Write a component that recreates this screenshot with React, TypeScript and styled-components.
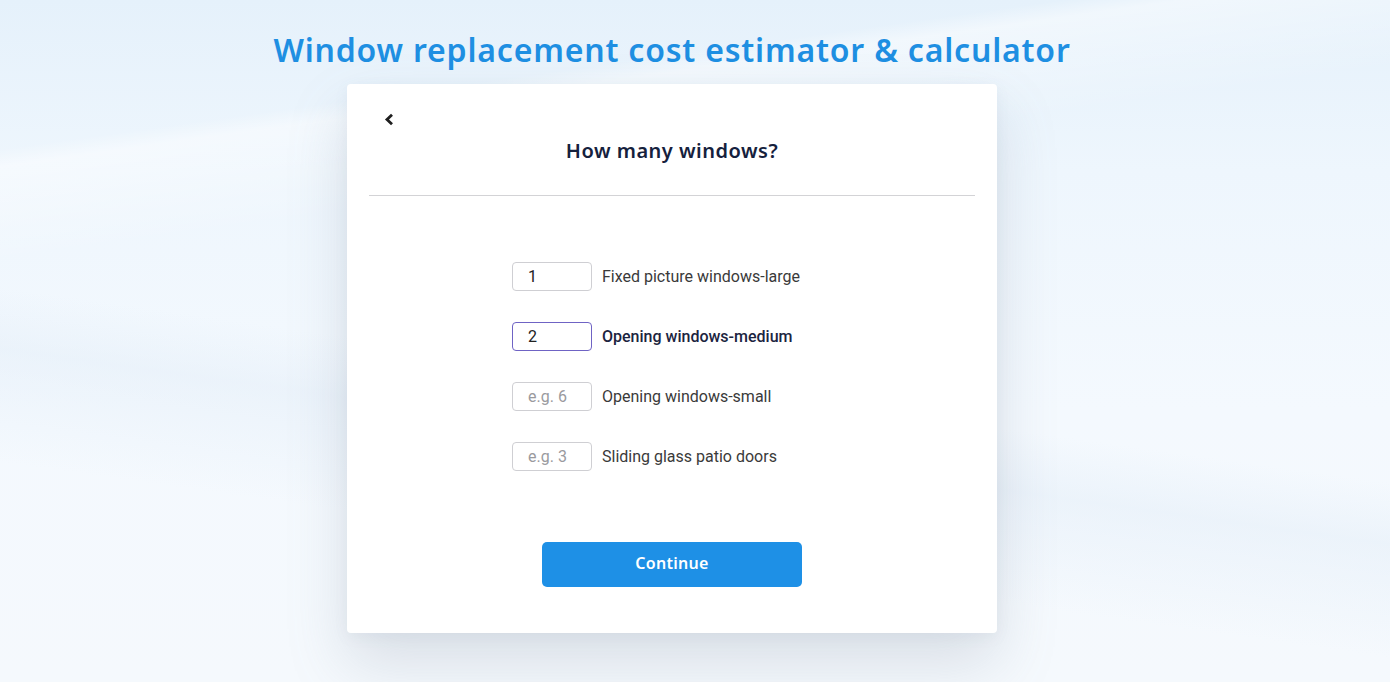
import React, { useState } from "react";
import styled, { createGlobalStyle } from "styled-components";

const Global = createGlobalStyle`
  html, body { margin: 0; padding: 0; }
  body {
    font-family: Roboto, "Liberation Sans", sans-serif;
    background: #eef6fd;
  }
  * { box-sizing: border-box; }
`;

const Page = styled.div`
  min-height: 682px;
  width: 100%;
  overflow: hidden;
  background:
    linear-gradient(172deg, rgba(255,255,255,0) 0%, rgba(255,255,255,0) 17%, rgba(255,255,255,0.45) 19%, rgba(255,255,255,0) 30%),
    linear-gradient(188deg, rgba(255,255,255,0) 55%, rgba(225,236,247,0.45) 62%, rgba(255,255,255,0) 75%),
    linear-gradient(180deg, #e5f1fb 0%, #eef6fd 25%, #f4f9fe 60%, #f5f9fd 100%);
`;

const Container = styled.div`
  width: 1344px;
  display: flex;
  flex-direction: column;
  align-items: center;
`;

const Title = styled.h1`
  margin: 28px 0 0;
  font-family: "Noto Sans", "Open Sans", sans-serif;
  font-weight: 600;
  font-size: 32px;
  line-height: 44px;
  color: #1e8fe2;
  letter-spacing: 0.8px;
  height: 56px;
  white-space: nowrap;
`;

const Card = styled.div`
  width: 650px;
  height: 549px;
  background: #fff;
  border-radius: 4px;
  box-shadow: 0 30px 60px rgba(120, 130, 150, 0.22), 0 4px 14px rgba(120, 130, 150, 0.08);
  padding: 0 22px;
  display: flex;
  flex-direction: column;
`;

const Header = styled.div`
  display: flex;
  flex-direction: column;
  padding-top: 27px;
  border-bottom: 1px solid #d3d3d6;
  height: 112px;
`;

const BackButton = styled.button`
  align-self: flex-start;
  margin-left: 12px;
  width: 16px;
  height: 16px;
  padding: 0;
  border: none;
  background: transparent;
  display: flex;
  align-items: center;
  justify-content: center;
  cursor: pointer;
`;

const Heading = styled.h2`
  margin: 11px 0 0;
  text-align: center;
  font-family: "Noto Sans", "Open Sans", sans-serif;
  font-weight: 600;
  font-size: 20px;
  line-height: 26px;
  letter-spacing: 0.5px;
  color: #15213d;
`;

const Form = styled.div`
  width: 320px;
  align-self: center;
  margin-top: 66px;
  display: flex;
  flex-direction: column;
  gap: 31px;
`;

const Row = styled.label`
  display: flex;
  align-items: center;
  gap: 10px;
`;

const NumInput = styled.input<{ $focused?: boolean }>`
  width: 80px;
  height: 29px;
  border: 1px solid ${(p) => (p.$focused ? "#6f63c4" : "#cfcfd3")};
  border-radius: 4px;
  padding: 0 0 0 15px;
  font-family: Roboto, "Liberation Sans", sans-serif;
  font-size: 16px;
  color: #222;
  outline: none;
  background: #fff;
  &::placeholder { color: #9a9a9e; }
`;

const Label = styled.span<{ $active?: boolean }>`
  font-family: Roboto, "Liberation Sans", sans-serif;
  font-size: 16px;
  font-weight: ${(p) => (p.$active ? 500 : 400)};
  color: ${(p) => (p.$active ? "#1b2440" : "#3a3a3a")};
`;

const ContinueButton = styled.button`
  align-self: center;
  margin-top: 71px;
  width: 260px;
  height: 45px;
  padding: 0 0 3px;
  border: none;
  border-radius: 5px;
  background: #1e90e6;
  color: #fff;
  font-family: "Noto Sans", "Open Sans", sans-serif;
  font-weight: 600;
  font-size: 16px;
  letter-spacing: 0.3px;
  cursor: pointer;
`;

const rows = [
  { value: "1", placeholder: "", label: "Fixed picture windows-large" },
  { value: "2", placeholder: "", label: "Opening windows-medium", active: true },
  { value: "", placeholder: "e.g. 6", label: "Opening windows-small" },
  { value: "", placeholder: "e.g. 3", label: "Sliding glass patio doors" },
];

export default function App() {
  const [vals, setVals] = useState(rows.map((r) => r.value));
  return (
    <>
      <Global />
      <Page>
        <Container>
          <Title>Window replacement cost estimator &amp; calculator</Title>
          <Card>
            <Header>
              <BackButton aria-label="Back">
                <svg width="11" height="13" viewBox="0 0 11 13">
                  <polyline points="8,1.8 3,6.5 8,11.2" fill="none" stroke="#1f1f1f" strokeWidth="2.8" strokeLinejoin="miter" />
                </svg>
              </BackButton>
              <Heading>How many windows?</Heading>
            </Header>
            <Form>
              {rows.map((r, i) => (
                <Row key={r.label}>
                  <NumInput
                    $focused={r.active}
                    value={vals[i]}
                    placeholder={r.placeholder}
                    onChange={(e) => {
                      const n = [...vals];
                      n[i] = e.target.value;
                      setVals(n);
                    }}
                  />
                  <Label $active={r.active}>{r.label}</Label>
                </Row>
              ))}
            </Form>
            <ContinueButton>Continue</ContinueButton>
          </Card>
        </Container>
      </Page>
    </>
  );
}
